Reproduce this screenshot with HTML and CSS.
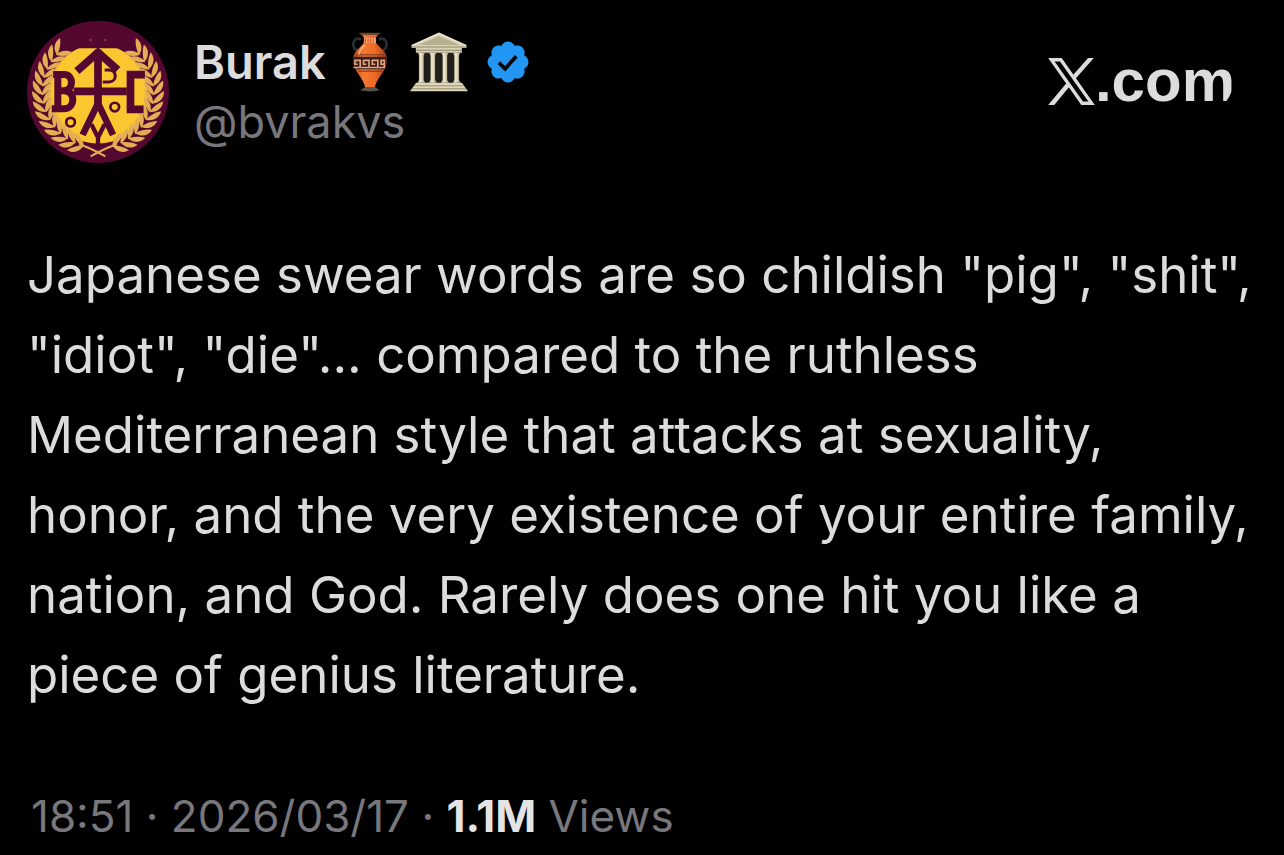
FILE: index.html
```html
<!DOCTYPE html>
<html lang="en">
<head>
<meta charset="utf-8">
<meta name="viewport" content="width=device-width, initial-scale=1">
<title>Burak on X</title>
<link rel="stylesheet" href="styles.css">
</head>
<body>
<article class="post">
  <header class="post-header">
    <svg class="avatar" viewBox="34 34 424 424" role="img" aria-label="Burak's avatar">
      <defs>
        <g id="pair">
          <path d="M78 254C58 248 48 232 52 212C66 222 74 236 80 250Z"/>
          <path d="M78 254C82 234 92 222 110 216C108 232 98 246 80 256Z"/>
        </g>
        <g id="branch">
          <use href="#pair" transform="rotate(-72 246 246)"/>
          <use href="#pair" transform="rotate(-63 246 246)"/>
          <use href="#pair" transform="rotate(-54 246 246)"/>
          <use href="#pair" transform="rotate(-45 246 246)"/>
          <use href="#pair" transform="rotate(-36 246 246)"/>
          <use href="#pair" transform="rotate(-27 246 246)"/>
          <use href="#pair" transform="rotate(-18 246 246)"/>
          <use href="#pair" transform="rotate(-9 246 246)"/>
          <use href="#pair"/>
          <use href="#pair" transform="rotate(9 246 246)"/>
          <use href="#pair" transform="rotate(18 246 246)"/>
          <use href="#pair" transform="rotate(27 246 246)"/>
          <use href="#pair" transform="rotate(36 246 246)"/>
          <use href="#pair" transform="rotate(45 246 246)"/>
        </g>
      </defs>
      <circle cx="246" cy="246" r="212" fill="#54082f"/>
      <circle cx="246" cy="252" r="148" fill="#fbc62f"/>
      <path d="M184 60H306V115H184Z" fill="#54082f"/>
      <g fill="#e3ac55">
        <use href="#branch"/>
        <use href="#branch" transform="matrix(-1 0 0 1 492 0)"/>
      </g>
      <path d="M190 402Q225 414 268 438M302 402Q267 414 224 438" fill="none" stroke="#e3ac55" stroke-width="6"/>
      <path d="M219 91H228M263 91H272" stroke="#a56a36" stroke-width="3"/>
      <g fill="none" stroke="#54082f">
        <path d="M246 120V290M183 184L246 128L305 180M173 244H332" stroke-width="23"/>
        <path d="M246 280L200 374M246 280L291 374" stroke-width="20"/>
        <path d="M226 342L246 382L266 342M246 378V408" stroke-width="13"/>
        <path d="M112 194H146C174 194 174 242 144 242H124M144 242C180 242 179 296 144 296H108M126 192V298" stroke-width="21"/>
        <path d="M386 194H343V298H382" stroke-width="23"/>
        <path d="M266 180H278C304 180 304 216 278 216H260" stroke-width="9"/>
        <circle cx="296" cy="291" r="13" stroke-width="8"/>
        <circle cx="164" cy="336" r="13" stroke-width="8"/>
      </g>
    </svg>
    <div class="author">
      <div class="name-row">
        <span class="name">Burak</span>
        <svg class="amphora" viewBox="38 34 112 184" role="img" aria-label="Amphora">
          <defs>
            <linearGradient id="clay" x1="0" x2="1">
              <stop offset="0" stop-color="#b94418"/><stop offset=".3" stop-color="#f47a32"/>
              <stop offset=".65" stop-color="#ef6a26"/><stop offset="1" stop-color="#a83c17"/>
            </linearGradient>
          </defs>
          <path d="M66 56C38 46 36 86 56 91M122 56C150 46 151 86 132 91" fill="none" stroke="#292f34" stroke-width="8"/>
          <path d="M68 42H119L112 51V65C113 78 146 88 146 120C146 154 115 173 109 203H79C73 173 42 154 42 120C42 88 75 78 75 65V51Z" fill="url(#clay)"/>
          <path d="M76 52H112V68H76Z" fill="#f8a071"/>
          <path d="M80 54V67M88 54V68M96 54V68M104 54V67" stroke="#c84f24" stroke-width="3"/>
          <path d="M59 36H127L120 43H67Z" fill="#704531"/>
          <path d="M43 110H145Q149 130 137 148H52Q39 130 43 110Z" fill="#351f1b"/>
          <path d="M49 104H139M59 154H130" stroke="#713220" stroke-width="3"/>
          <path d="M43 143H64V121H48V133H56M67 143H91V121H74V133H83M94 143H118V121H101V133H110M121 143H138V121H128V133H136" fill="none" stroke="#e8a17c" stroke-width="5"/>
          <path d="M79 203H109L124 213Q95 220 64 213Z" fill="#5b5350"/>
          <path d="M78 75Q62 87 60 103" fill="none" stroke="#ffb27d" stroke-width="5"/>
        </svg>
        <svg class="temple" viewBox="210 34 180 184" role="img" aria-label="Classical building">
          <defs>
            <linearGradient id="stone" x1="0" x2="1">
              <stop offset="0" stop-color="#b7ad8d"/><stop offset=".4" stop-color="#f1ead0"/><stop offset="1" stop-color="#a89d7d"/>
            </linearGradient>
          </defs>
          <path d="M237 98H363V192H237Z" fill="#211e1b"/>
          <path d="M216 76L300 36L384 76V83H370V98H229V83H216Z" fill="#d9d1b6"/>
          <path d="M238 74L300 46L362 74Z" fill="#b8ae90"/>
          <path d="M218 80H382M231 90H369" stroke="#8f8569" stroke-width="3"/>
          <path d="M216 76L300 38L384 76" fill="none" stroke="#eee7ce" stroke-width="4"/>
          <g fill="url(#stone)">
            <path d="M235 98H257L253 106V181L258 190H234L239 181V106Z"/>
            <path d="M270 98H292L288 106V181L293 190H269L274 181V106Z"/>
            <path d="M307 98H329L325 106V181L330 190H306L311 181V106Z"/>
            <path d="M343 98H365L361 106V181L366 190H342L347 181V106Z"/>
          </g>
          <path d="M230 190H370L389 216H211Z" fill="#ded6ba"/>
          <path d="M225 199H375M217 208H383" stroke="#978d70" stroke-width="3"/>
        </svg>
        <svg class="verified" viewBox="0 0 22 22" role="img" aria-label="Verified account">
          <path d="M20.396 11c-.018-.646-.215-1.275-.57-1.816-.354-.54-.852-.972-1.438-1.246.223-.607.27-1.264.14-1.897-.131-.634-.437-1.218-.882-1.687-.47-.445-1.053-.75-1.687-.882-.633-.13-1.29-.083-1.897.14-.273-.587-.704-1.086-1.245-1.44S11.647 1.62 11 1.604c-.646.017-1.273.213-1.813.568s-.969.854-1.24 1.44c-.608-.223-1.267-.272-1.902-.14-.635.13-1.22.436-1.69.882-.445.47-.749 1.055-.878 1.688-.13.633-.08 1.29.144 1.896-.587.274-1.087.705-1.443 1.245-.356.54-.555 1.17-.574 1.817.02.647.218 1.276.574 1.817.356.54.856.972 1.443 1.245-.224.606-.274 1.263-.144 1.896.13.634.433 1.218.877 1.688.47.443 1.054.747 1.687.878.633.132 1.29.084 1.897-.136.274.586.705 1.084 1.246 1.439.54.354 1.17.551 1.816.569.647-.016 1.276-.213 1.817-.567s.972-.854 1.245-1.44c.604.239 1.266.296 1.903.164.636-.132 1.22-.447 1.68-.907.46-.46.776-1.044.908-1.681s.075-1.299-.165-1.903c.586-.274 1.084-.705 1.439-1.246.354-.54.551-1.17.569-1.816z" fill="#2196f3"/>
          <path d="M6.8 11.3L9.7 14.1L14.8 8.4" fill="none" stroke="#030608" stroke-width="1.7"/>
        </svg>
      </div>
      <div class="handle">@bvrakvs</div>
    </div>
    <div class="brand">
      <svg class="x-logo" viewBox="53 50 138 139" role="img" aria-label="X">
        <path d="M53 50H93L191 189H151ZM72 60L156 179H172L88 60Z" fill="#dcdcdc" fill-rule="evenodd"/>
        <path d="M171 50H188L134 111L126 101ZM110 121L118 132L71 189H53Z" fill="#dcdcdc"/>
      </svg>
      <span class="brand-text">.com</span>
    </div>
  </header>
  <p class="post-text">Japanese swear words are so childish "pig", "shit", "idiot", "die"... compared to the ruthless Mediterranean style that attacks at sexuality, honor, and the very existence of your entire family, nation, and God. Rarely does one hit you like a piece of genius literature.</p>
  <footer class="meta"><time datetime="2026-03-17T18:51">18:51 · 2026/03/17</time> · <strong class="count">1.1M</strong> Views</footer>
</article>
</body>
</html>
```
FILE: styles.css
```css
* {
  box-sizing: border-box;
}

body {
  margin: 0;
  background: #000;
  color: #dcdcdc;
  font-family: Inter, "Liberation Sans", sans-serif;
}

.post {
  padding: 21px 27px 4px;
}

.post-header {
  display: flex;
  align-items: flex-start;
}

.avatar {
  width: 142px;
  height: 142px;
  flex: none;
}

.author {
  margin-left: 25px;
  padding-top: 11px;
}

.name-row {
  display: flex;
  align-items: center;
  height: 60px;
}

.name {
  font-size: 47px;
  font-weight: 600;
  line-height: 60px;
}

.amphora {
  width: 38px;
  height: 60px;
  margin-left: 25px;
}

.temple {
  width: 60px;
  height: 60px;
  margin-left: 20px;
}

.verified {
  width: 48px;
  height: 48px;
  margin-left: 15px;
}

.handle {
  color: #77777c;
  font-size: 45px;
  line-height: 60px;
}

.brand {
  display: flex;
  align-items: center;
  margin-left: auto;
  padding: 25px 22px 0 0;
}

.x-logo {
  width: 47px;
  height: 47px;
}

.brand-text {
  clip-path: inset(0 round 0 0 36px 0 / 0 0 42px 0);
  font-family: "Liberation Sans", sans-serif;
  font-size: 60px;
  font-weight: 700;
  line-height: 70px;
}

.post-text {
  margin: 72px 0 0;
  font-size: 51px;
  line-height: 80px;
}

.meta {
  margin: 71px 0 0 4px;
  color: #77777c;
  font-size: 44px;
  line-height: 60px;
}

.count {
  color: #e4e4e4;
  font-weight: 700;
}
```
